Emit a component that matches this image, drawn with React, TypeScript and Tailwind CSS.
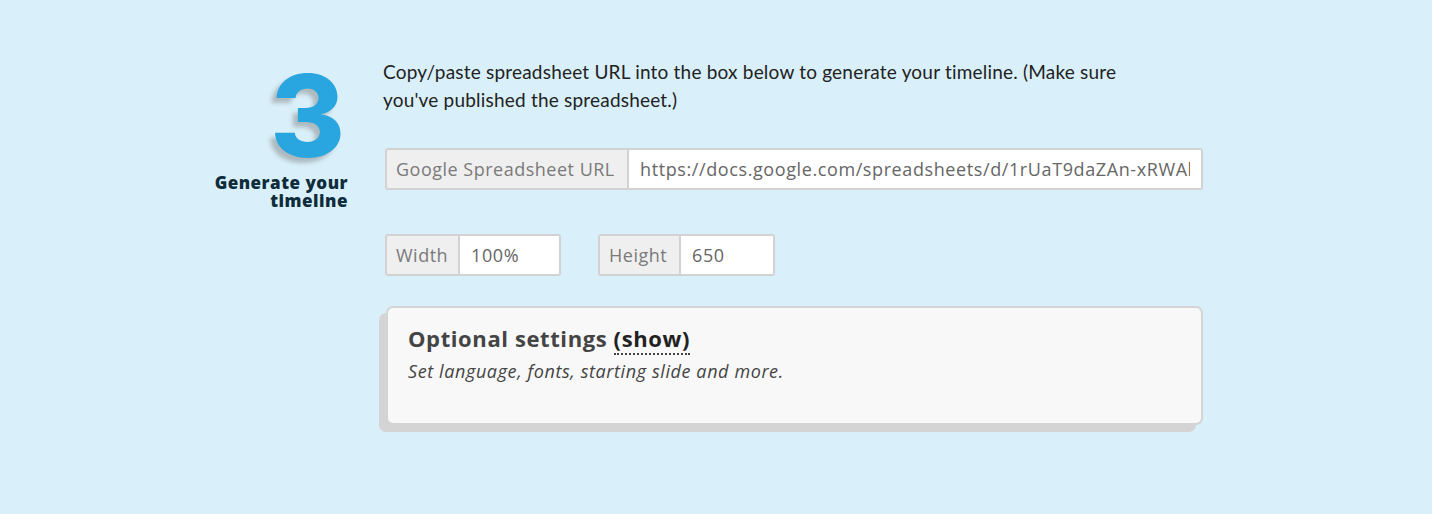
import React from 'react';

const sans = { fontFamily: '"Open Sans", "Liberation Sans", sans-serif' };

function AddonField({
  label,
  value,
  labelW,
  inputW,
}: {
  label: string;
  value: string;
  labelW: string;
  inputW: string;
}) {
  return (
    <div className="flex h-[42px] rounded-[3px] border-2 border-[#d2d2d2] overflow-hidden">
      <span
        className={`${labelW} flex items-center pl-[9px] bg-[#efefef] border-r-2 border-[#d2d2d2] text-[18px] tracking-[0.5px] text-[#7a7a7a] whitespace-nowrap`}
      >
        {label}
      </span>
      <input
        readOnly
        value={value}
        className={`${inputW} min-w-0 bg-white px-[11px] text-[18px] tracking-[0.6px] text-[#666] outline-none`}
      />
    </div>
  );
}

export default function App() {
  return (
    <div className="min-h-[514px] w-full bg-[#d9f0fa]" style={sans}>
      <div className="flex pt-[58px]">
        <div className="w-[348px] shrink-0 flex flex-col items-end">
          <div
            className="text-[114px] leading-[88px] font-extrabold text-[#29a6df] pr-[3px] mt-[14px] mb-[14px]"
            style={{ textShadow: '-5px 5px 4px rgba(120,120,120,0.45)', fontFamily: 'Inter, sans-serif' }}
          >
            3
          </div>
          <h3 className="text-right text-[17px] leading-[18px] font-extrabold tracking-[0.5px] text-[#0e2c3a]">
            Generate your
            <br />
            timeline
          </h3>
        </div>

        <div className="ml-[35px] w-[820px]">
          <p
            className="w-[785px] text-[19px] leading-[28px] tracking-[0.2px] text-[#222]"
            style={{ fontFamily: 'Lato, sans-serif' }}
          >
            Copy/paste spreadsheet URL into the box below to generate your timeline. (Make sure you've
            published the spreadsheet.)
          </p>

          <div className="mt-[34px] ml-[2px]">
            <AddonField
              label="Google Spreadsheet URL"
              value="https://docs.google.com/spreadsheets/d/1rUaT9daZAn-xRWAhBmEcvx2Hd"
              labelW="w-[242px]"
              inputW="flex-1"
            />
          </div>

          <div className="mt-[44px] ml-[2px] flex gap-[37px]">
            <AddonField label="Width" value="100%" labelW="w-[73px]" inputW="w-[99px]" />
            <AddonField label="Height" value="650" labelW="w-[81px]" inputW="w-[92px]" />
          </div>

          <div className="mt-[30px] ml-[3px] rounded-[7px] border-2 border-[#d4d4d4] bg-[#f8f8f8] shadow-[-7px_7px_0_#d4d4d4] h-[119px] px-[20px] pt-[14px]">
            <h4 className="text-[22px] font-bold tracking-[0.6px] text-[#444]">
              Optional settings{' '}
              <span className="text-[#222] border-b-2 border-dotted border-[#444]">(show)</span>
            </h4>
            <p className="mt-[3px] text-[18px] italic tracking-[0.6px] text-[#444]">
              Set language, fonts, starting slide and more.
            </p>
          </div>
        </div>
      </div>
    </div>
  );
}
